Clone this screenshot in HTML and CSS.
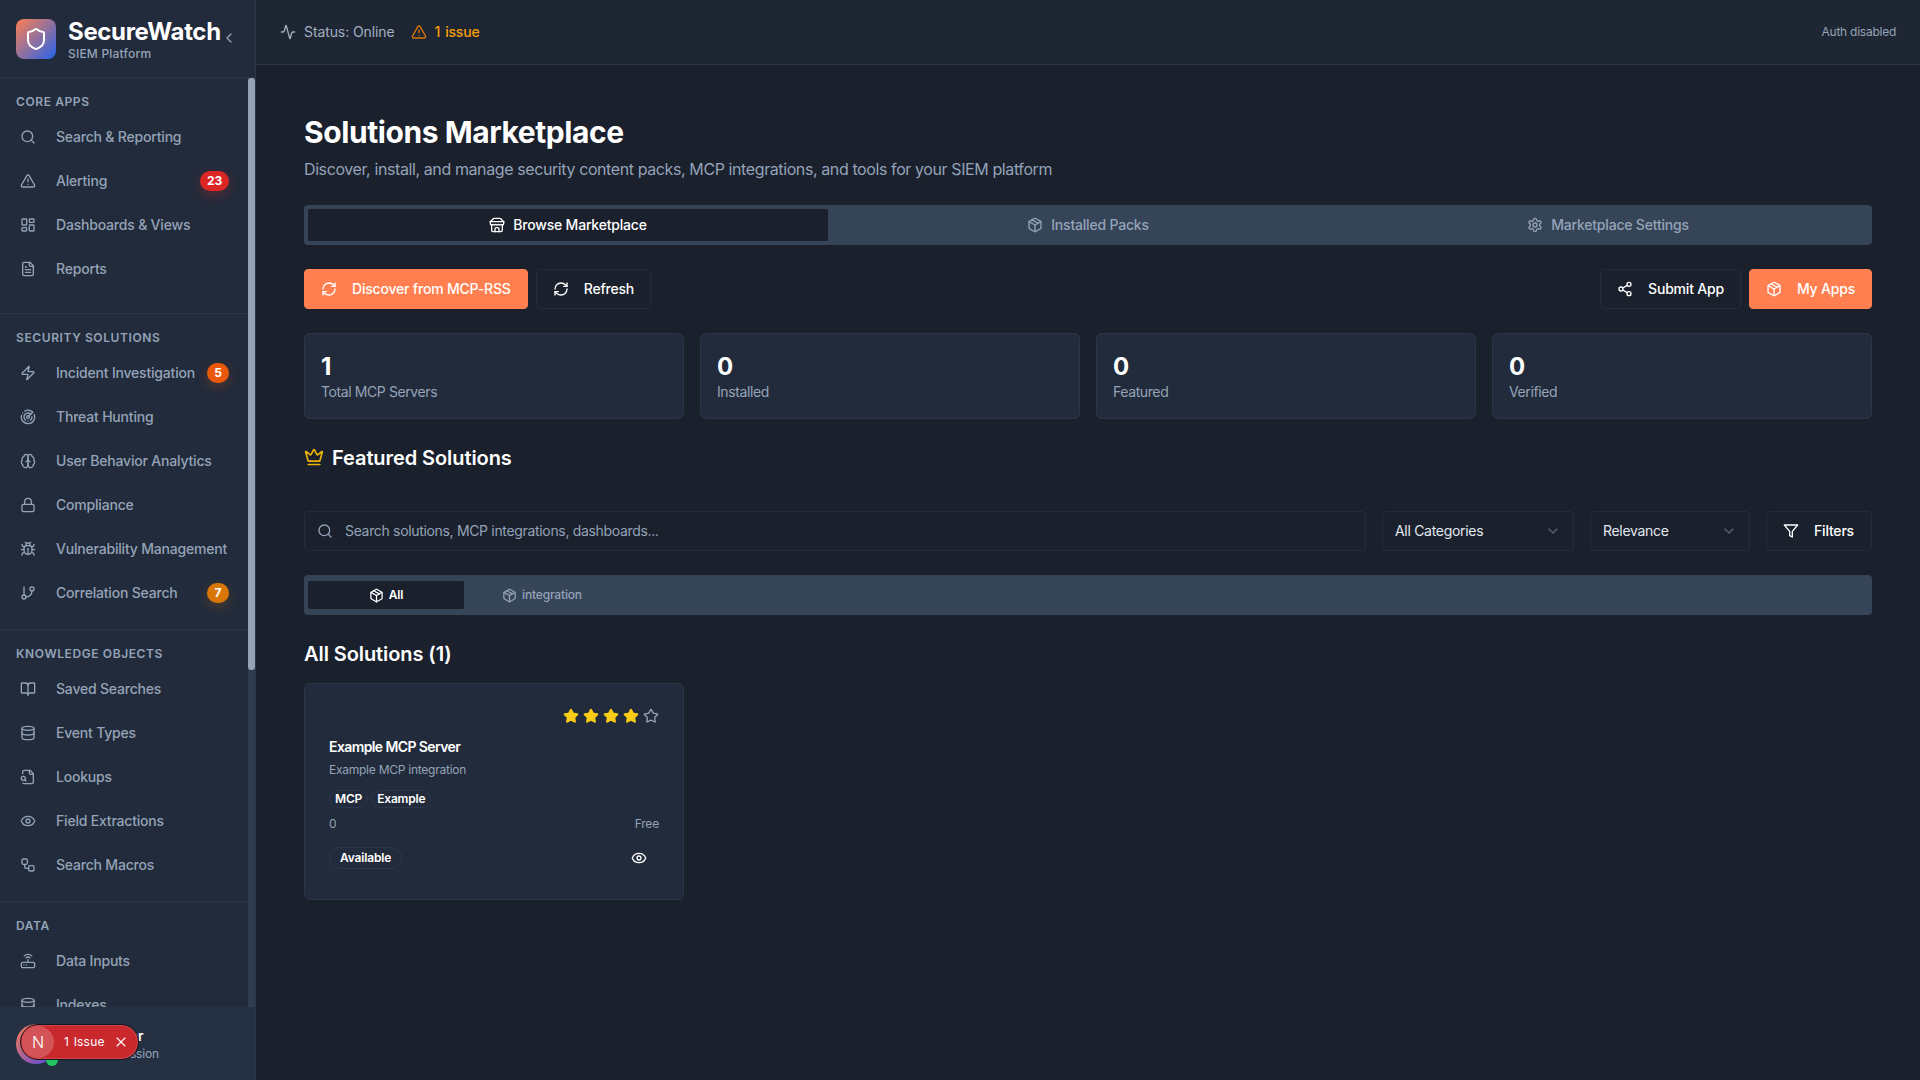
FILE: index.html
```html
<!DOCTYPE html>
<html lang="en">
<head>
  <meta charset="UTF-8" />
  <meta name="viewport" content="width=device-width, initial-scale=1.0"/>
  <title>SecureWatch - Solutions Marketplace</title>
  <link rel="stylesheet" href="styles.css">
</head>
<body>

<svg class="sprite" xmlns="http://www.w3.org/2000/svg">
  <symbol id="i-search" viewBox="0 0 24 24"><circle cx="11" cy="11" r="8"/><path d="m21 21-4.3-4.3"/></symbol>
  <symbol id="i-alert" viewBox="0 0 24 24"><path d="M21.73 18l-8-14a2 2 0 0 0-3.48 0l-8 14A2 2 0 0 0 4 21h16a2 2 0 0 0 1.73-3Z"/><path d="M12 9v4"/><path d="M12 17h.01"/></symbol>
  <symbol id="i-dashboard" viewBox="0 0 24 24"><rect x="3" y="3" width="7" height="9" rx="1"/><rect x="14" y="3" width="7" height="5" rx="1"/><rect x="14" y="12" width="7" height="9" rx="1"/><rect x="3" y="16" width="7" height="5" rx="1"/></symbol>
  <symbol id="i-file" viewBox="0 0 24 24"><path d="M15 2H6a2 2 0 0 0-2 2v16a2 2 0 0 0 2 2h12a2 2 0 0 0 2-2V7Z"/><path d="M14 2v4a2 2 0 0 0 2 2h4"/><path d="M10 9H8"/><path d="M16 13H8"/><path d="M16 17H8"/></symbol>
  <symbol id="i-zap" viewBox="0 0 24 24"><path d="M4 14a1 1 0 0 1-.78-1.63l9.9-10.2a.5.5 0 0 1 .86.46l-1.92 6.02A1 1 0 0 0 13 10h7a1 1 0 0 1 .78 1.63l-9.9 10.2a.5.5 0 0 1-.86-.46l1.92-6.02A1 1 0 0 0 11 14z"/></symbol>
  <symbol id="i-radar" viewBox="0 0 24 24"><path d="M19.07 4.93A10 10 0 0 0 6.99 3.34"/><path d="M4 6h.01"/><path d="M2.29 9.62A10 10 0 1 0 21.31 8.35"/><path d="M16.24 7.76A6 6 0 1 0 8.23 16.67"/><path d="M12 18h.01"/><path d="M17.99 11.66A6 6 0 0 1 15.77 16.67"/><circle cx="12" cy="12" r="2"/><path d="m13.41 10.59 5.66-5.66"/></symbol>
  <symbol id="i-brain" viewBox="0 0 24 24"><path d="M12 5a3 3 0 1 0-5.997.125 4 4 0 0 0-2.526 5.77 4 4 0 0 0 .556 6.588A4 4 0 1 0 12 18Z"/><path d="M12 5a3 3 0 1 1 5.997.125 4 4 0 0 1 2.526 5.77 4 4 0 0 1-.556 6.588A4 4 0 1 1 12 18Z"/><path d="M15 13a4.5 4.5 0 0 1-3-4 4.5 4.5 0 0 1-3 4"/></symbol>
  <symbol id="i-lock" viewBox="0 0 24 24"><rect x="3" y="11" width="18" height="11" rx="2"/><path d="M7 11V7a5 5 0 0 1 10 0v4"/></symbol>
  <symbol id="i-bug" viewBox="0 0 24 24"><path d="m8 2 1.88 1.88"/><path d="M14.12 3.88 16 2"/><path d="M9 7.13v-1a3.003 3.003 0 1 1 6 0v1"/><path d="M12 20c-3.3 0-6-2.7-6-6v-3a4 4 0 0 1 4-4h4a4 4 0 0 1 4 4v3c0 3.3-2.7 6-6 6"/><path d="M12 20v-9"/><path d="M6.53 9C4.6 8.8 3 7.1 3 5"/><path d="M6 13H2"/><path d="M3 21c0-2.1 1.7-3.9 3.8-4"/><path d="M20.97 5c0 2.1-1.6 3.8-3.5 4"/><path d="M22 13h-4"/><path d="M17.2 17c2.1.1 3.8 1.9 3.8 4"/></symbol>
  <symbol id="i-branch" viewBox="0 0 24 24"><path d="M6 3v12"/><circle cx="18" cy="6" r="3"/><circle cx="6" cy="18" r="3"/><path d="M18 9a9 9 0 0 1-9 9"/></symbol>
  <symbol id="i-book" viewBox="0 0 24 24"><path d="M12 7v14"/><path d="M3 18a1 1 0 0 1-1-1V4a1 1 0 0 1 1-1h5a4 4 0 0 1 4 4 4 4 0 0 1 4-4h5a1 1 0 0 1 1 1v13a1 1 0 0 1-1 1h-6a3 3 0 0 0-3 3 3 3 0 0 0-3-3z"/></symbol>
  <symbol id="i-database" viewBox="0 0 24 24"><ellipse cx="12" cy="5" rx="9" ry="3"/><path d="M3 5V19A9 3 0 0 0 21 19V5"/><path d="M3 12A9 3 0 0 0 21 12"/></symbol>
  <symbol id="i-filesearch" viewBox="0 0 24 24"><path d="M14 2v4a2 2 0 0 0 2 2h4"/><path d="M4.268 21a2 2 0 0 0 1.727 1H18a2 2 0 0 0 2-2V7l-5-5H6a2 2 0 0 0-2 2v3"/><path d="m9 18-1.5-1.5"/><circle cx="5" cy="14" r="3"/></symbol>
  <symbol id="i-eye" viewBox="0 0 24 24"><path d="M2.062 12.348a1 1 0 0 1 0-.696 10.75 10.75 0 0 1 19.876 0 1 1 0 0 1 0 .696 10.75 10.75 0 0 1-19.876 0"/><circle cx="12" cy="12" r="3"/></symbol>
  <symbol id="i-workflow" viewBox="0 0 24 24"><rect x="3" y="3" width="8" height="8" rx="2"/><path d="M7 11v4a2 2 0 0 0 2 2h4"/><rect x="13" y="13" width="8" height="8" rx="2"/></symbol>
  <symbol id="i-router" viewBox="0 0 24 24"><rect x="2" y="14" width="20" height="8" rx="2"/><path d="M6.01 18H6"/><path d="M10.01 18H10"/><path d="M12 10v4"/><path d="M14.83 7.17a4 4 0 0 0-5.66 0"/><path d="M17.66 4.34a8 8 0 0 0-11.31 0"/></symbol>
  <symbol id="i-activity" viewBox="0 0 24 24"><path d="M22 12h-2.48a2 2 0 0 0-1.93 1.46l-2.35 8.36a.25.25 0 0 1-.48 0L9.24 2.18a.25.25 0 0 0-.48 0l-2.35 8.36A2 2 0 0 1 4.49 12H2"/></symbol>
  <symbol id="i-store" viewBox="0 0 24 24"><path d="m2 7 4.41-4.41A2 2 0 0 1 7.83 2h8.34a2 2 0 0 1 1.42.59L22 7"/><path d="M4 12v8a2 2 0 0 0 2 2h12a2 2 0 0 0 2-2v-8"/><path d="M15 22v-4a2 2 0 0 0-2-2h-2a2 2 0 0 0-2 2v4"/><path d="M2 7h20"/><path d="M22 7v3a2 2 0 0 1-2 2a2.7 2.7 0 0 1-1.59-.63.7.7 0 0 0-.82 0A2.7 2.7 0 0 1 16 12a2.7 2.7 0 0 1-1.59-.63.7.7 0 0 0-.82 0A2.7 2.7 0 0 1 12 12a2.7 2.7 0 0 1-1.59-.63.7.7 0 0 0-.82 0A2.7 2.7 0 0 1 8 12a2.7 2.7 0 0 1-1.59-.63.7.7 0 0 0-.82 0A2.7 2.7 0 0 1 4 12a2 2 0 0 1-2-2V7"/></symbol>
  <symbol id="i-package" viewBox="0 0 24 24"><path d="M11 21.73a2 2 0 0 0 2 0l7-4A2 2 0 0 0 21 16V8a2 2 0 0 0-1-1.73l-7-4a2 2 0 0 0-2 0l-7 4A2 2 0 0 0 3 8v8a2 2 0 0 0 1 1.73z"/><path d="M12 22V12"/><path d="M3.29 7 12 12l8.71-5"/><path d="m7.5 4.27 9 5.15"/></symbol>
  <symbol id="i-settings" viewBox="0 0 24 24"><path d="M12.22 2h-.44a2 2 0 0 0-2 2v.18a2 2 0 0 1-1 1.73l-.43.25a2 2 0 0 1-2 0l-.15-.08a2 2 0 0 0-2.73.73l-.22.38a2 2 0 0 0 .73 2.73l.15.1a2 2 0 0 1 1 1.72v.51a2 2 0 0 1-1 1.74l-.15.09a2 2 0 0 0-.73 2.73l.22.38a2 2 0 0 0 2.73.73l.15-.08a2 2 0 0 1 2 0l.43.25a2 2 0 0 1 1 1.73V20a2 2 0 0 0 2 2h.44a2 2 0 0 0 2-2v-.18a2 2 0 0 1 1-1.73l.43-.25a2 2 0 0 1 2 0l.15.08a2 2 0 0 0 2.73-.73l.22-.39a2 2 0 0 0-.73-2.73l-.15-.08a2 2 0 0 1-1-1.74v-.5a2 2 0 0 1 1-1.74l.15-.09a2 2 0 0 0 .73-2.73l-.22-.38a2 2 0 0 0-2.73-.73l-.15.08a2 2 0 0 1-2 0l-.43-.25a2 2 0 0 1-1-1.73V4a2 2 0 0 0-2-2z"/><circle cx="12" cy="12" r="3"/></symbol>
  <symbol id="i-refresh" viewBox="0 0 24 24"><path d="M3 12a9 9 0 0 1 9-9 9.75 9.75 0 0 1 6.74 2.74L21 8"/><path d="M21 3v5h-5"/><path d="M21 12a9 9 0 0 1-9 9 9.75 9.75 0 0 1-6.74-2.74L3 16"/><path d="M8 16H3v5"/></symbol>
  <symbol id="i-share" viewBox="0 0 24 24"><circle cx="18" cy="5" r="3"/><circle cx="6" cy="12" r="3"/><circle cx="18" cy="19" r="3"/><path d="m8.59 13.51 6.83 3.98"/><path d="m15.41 6.51-6.82 3.98"/></symbol>
  <symbol id="i-crown" viewBox="0 0 24 24"><path d="M11.562 3.266a.5.5 0 0 1 .876 0L15.39 8.87a1 1 0 0 0 1.516.294L21.183 5.5a.5.5 0 0 1 .798.519l-2.834 10.246a1 1 0 0 1-.956.734H5.81a1 1 0 0 1-.957-.734L2.02 6.02a.5.5 0 0 1 .798-.519l4.276 3.664a1 1 0 0 0 1.516-.294z"/><path d="M5 21h14"/></symbol>
  <symbol id="i-funnel" viewBox="0 0 24 24"><path d="M22 3H2l8 9.46V19l4 2v-8.54z"/></symbol>
  <symbol id="i-star" viewBox="0 0 24 24"><path d="M11.525 2.295a.53.53 0 0 1 .95 0l2.31 4.679a2.123 2.123 0 0 0 1.595 1.16l5.166.756a.53.53 0 0 1 .294.904l-3.736 3.638a2.123 2.123 0 0 0-.611 1.878l.882 5.14a.53.53 0 0 1-.771.56l-4.618-2.428a2.122 2.122 0 0 0-1.973 0L6.396 21.01a.53.53 0 0 1-.77-.56l.881-5.139a2.122 2.122 0 0 0-.611-1.879L2.16 9.795a.53.53 0 0 1 .294-.906l5.165-.755a2.122 2.122 0 0 0 1.597-1.16z"/></symbol>
  <symbol id="i-shield" viewBox="0 0 24 24"><path d="M20 13c0 5-3.5 7.5-7.66 8.95a1 1 0 0 1-.67-.01C7.5 20.5 4 18 4 13V6a1 1 0 0 1 1-1c2 0 4.5-1.2 6.24-2.72a1.17 1.17 0 0 1 1.52 0C14.51 3.81 17 5 19 5a1 1 0 0 1 1 1z"/></symbol>
  <symbol id="i-chevron-down" viewBox="0 0 24 24"><path d="m6 9 6 6 6-6"/></symbol>
  <symbol id="i-chevron-left" viewBox="0 0 24 24"><path d="m15 18-6-6 6-6"/></symbol>
  <symbol id="i-x" viewBox="0 0 24 24"><path d="M18 6 6 18"/><path d="m6 6 12 12"/></symbol>
</svg>

<aside class="sidebar">
  <div class="brand">
    <div class="brand-logo"><svg class="icon icon-logo"><use href="#i-shield"/></svg></div>
    <div class="brand-text">
      <div class="brand-name">SecureWatch</div>
      <div class="brand-sub">SIEM Platform</div>
    </div>
    <svg class="icon brand-toggle"><use href="#i-chevron-left"/></svg>
  </div>

  <div class="nav-wrap">
    <nav class="nav">
      <section class="nav-section nav-section-first">
        <h3 class="nav-label">Core Apps</h3>
        <a class="nav-item"><svg class="icon"><use href="#i-search"/></svg><span>Search &amp; Reporting</span></a>
        <a class="nav-item"><svg class="icon"><use href="#i-alert"/></svg><span>Alerting</span><b class="nav-badge badge-red">23</b></a>
        <a class="nav-item"><svg class="icon"><use href="#i-dashboard"/></svg><span>Dashboards &amp; Views</span></a>
        <a class="nav-item"><svg class="icon"><use href="#i-file"/></svg><span>Reports</span></a>
      </section>
      <section class="nav-section">
        <h3 class="nav-label">Security Solutions</h3>
        <a class="nav-item"><svg class="icon"><use href="#i-zap"/></svg><span>Incident Investigation</span><b class="nav-badge badge-orange">5</b></a>
        <a class="nav-item"><svg class="icon"><use href="#i-radar"/></svg><span>Threat Hunting</span></a>
        <a class="nav-item"><svg class="icon"><use href="#i-brain"/></svg><span>User Behavior Analytics</span></a>
        <a class="nav-item"><svg class="icon"><use href="#i-lock"/></svg><span>Compliance</span></a>
        <a class="nav-item"><svg class="icon"><use href="#i-bug"/></svg><span>Vulnerability Management</span></a>
        <a class="nav-item"><svg class="icon"><use href="#i-branch"/></svg><span>Correlation Search</span><b class="nav-badge badge-amber">7</b></a>
      </section>
      <section class="nav-section">
        <h3 class="nav-label">Knowledge Objects</h3>
        <a class="nav-item"><svg class="icon"><use href="#i-book"/></svg><span>Saved Searches</span></a>
        <a class="nav-item"><svg class="icon"><use href="#i-database"/></svg><span>Event Types</span></a>
        <a class="nav-item"><svg class="icon"><use href="#i-filesearch"/></svg><span>Lookups</span></a>
        <a class="nav-item"><svg class="icon"><use href="#i-eye"/></svg><span>Field Extractions</span></a>
        <a class="nav-item"><svg class="icon"><use href="#i-workflow"/></svg><span>Search Macros</span></a>
      </section>
      <section class="nav-section">
        <h3 class="nav-label">Data</h3>
        <a class="nav-item"><svg class="icon"><use href="#i-router"/></svg><span>Data Inputs</span></a>
        <a class="nav-item"><svg class="icon"><use href="#i-database"/></svg><span>Indexes</span></a>
      </section>
    </nav>
    <div class="scroll-track"><div class="scroll-thumb"></div></div>
  </div>

  <div class="user">
    <div class="user-avatar"><span class="user-dot"></span></div>
    <div class="user-text">
      <div class="user-name">Guest User</div>
      <div class="user-sub">Local session</div>
    </div>
  </div>
</aside>

<div class="page">
  <header class="topbar">
    <div class="topbar-status">
      <svg class="icon"><use href="#i-activity"/></svg>
      <span>Status: Online</span>
    </div>
    <div class="topbar-issue">
      <svg class="icon"><use href="#i-alert"/></svg>
      <span>1 issue</span>
    </div>
    <div class="topbar-auth">Auth disabled</div>
  </header>

  <main class="content">
    <h1 class="title">Solutions Marketplace</h1>
    <p class="subtitle">Discover, install, and manage security content packs, MCP integrations, and tools for your SIEM platform</p>

    <div class="tabs">
      <div class="tab tab-active"><svg class="icon"><use href="#i-store"/></svg>Browse Marketplace</div>
      <div class="tab"><svg class="icon"><use href="#i-package"/></svg>Installed Packs</div>
      <div class="tab"><svg class="icon"><use href="#i-settings"/></svg>Marketplace Settings</div>
    </div>

    <div class="actions">
      <button class="btn btn-primary"><svg class="icon"><use href="#i-refresh"/></svg>Discover from MCP-RSS</button>
      <button class="btn"><svg class="icon"><use href="#i-refresh"/></svg>Refresh</button>
      <div class="actions-right">
        <button class="btn"><svg class="icon"><use href="#i-share"/></svg>Submit App</button>
        <button class="btn btn-primary"><svg class="icon"><use href="#i-package"/></svg>My Apps</button>
      </div>
    </div>

    <div class="stats">
      <div class="stat"><div class="stat-value">1</div><div class="stat-label">Total MCP Servers</div></div>
      <div class="stat"><div class="stat-value">0</div><div class="stat-label">Installed</div></div>
      <div class="stat"><div class="stat-value">0</div><div class="stat-label">Featured</div></div>
      <div class="stat"><div class="stat-value">0</div><div class="stat-label">Verified</div></div>
    </div>

    <h2 class="section-title featured"><svg class="icon icon-crown"><use href="#i-crown"/></svg>Featured Solutions</h2>

    <div class="filters">
      <div class="search">
        <svg class="icon"><use href="#i-search"/></svg>
        <span>Search solutions, MCP integrations, dashboards...</span>
      </div>
      <div class="select select-cat">All Categories<svg class="icon"><use href="#i-chevron-down"/></svg></div>
      <div class="select select-sort">Relevance<svg class="icon"><use href="#i-chevron-down"/></svg></div>
      <button class="btn btn-filter"><svg class="icon"><use href="#i-funnel"/></svg>Filters</button>
    </div>

    <div class="cat-tabs">
      <div class="cat-tab cat-tab-active"><svg class="icon"><use href="#i-package"/></svg>All</div>
      <div class="cat-tab"><svg class="icon"><use href="#i-package"/></svg>integration</div>
    </div>

    <h2 class="section-title all-title">All Solutions (1)</h2>

    <div class="grid">
      <article class="card">
        <div class="stars">
          <svg class="icon star-on"><use href="#i-star"/></svg>
          <svg class="icon star-on"><use href="#i-star"/></svg>
          <svg class="icon star-on"><use href="#i-star"/></svg>
          <svg class="icon star-on"><use href="#i-star"/></svg>
          <svg class="icon star-off"><use href="#i-star"/></svg>
        </div>
        <div class="card-title">Example MCP Server</div>
        <div class="card-desc">Example MCP integration</div>
        <div class="card-tags">
          <span class="tag">MCP</span>
          <span class="tag">Example</span>
        </div>
        <div class="card-meta"><span>0</span><span>Free</span></div>
        <div class="card-foot">
          <span class="tag tag-status">Available</span>
          <button class="icon-btn"><svg class="icon"><use href="#i-eye"/></svg></button>
        </div>
      </article>
    </div>
  </main>
</div>

<div class="issue-pill">
  <span class="issue-n">N</span>
  <span class="issue-text">1 Issue</span>
  <svg class="icon issue-x"><use href="#i-x"/></svg>
</div>

</body>
</html>
```

FILE: styles.css
```css
* {
  box-sizing: border-box;
  letter-spacing: -0.014em;
}

html, body {
  height: 100%;
}

body {
  margin: 0;
  display: flex;
  overflow: hidden;
  background: #1a202c;
  color: #fff;
  font-family: Inter, "Liberation Sans", sans-serif;
  font-size: 14px;
  line-height: 20px;
}

.sprite {
  display: none;
}

.icon {
  width: 16px;
  height: 16px;
  flex: none;
  fill: none;
  stroke: currentColor;
  stroke-width: 2;
  stroke-linecap: round;
  stroke-linejoin: round;
}

button {
  font: inherit;
  color: inherit;
  background: none;
  border: none;
}

/* sidebar */

.sidebar {
  width: 256px;
  flex: none;
  height: 100vh;
  display: flex;
  flex-direction: column;
  background: #222b3b;
  border-right: 1px solid #2b3648;
}

.brand {
  height: 78px;
  flex: none;
  display: flex;
  align-items: center;
  padding: 0 16px;
  gap: 12px;
  position: relative;
  border-bottom: 1px solid #2b3648;
}

.brand-logo {
  width: 40px;
  height: 40px;
  border-radius: 8px;
  display: flex;
  align-items: center;
  justify-content: center;
  background: linear-gradient(135deg, #ff7f50, #2563eb);
}

.icon-logo {
  width: 24px;
  height: 24px;
  color: #fff;
}

.brand-name {
  font-size: 24px;
  line-height: 32px;
  font-weight: 700;
  margin-top: 1px;
}

.brand-sub {
  font-size: 12px;
  line-height: 16px;
  font-weight: 500;
  letter-spacing: 0.2px;
  color: #94a3b8;
  margin-top: -2px;
}

.brand-toggle {
  position: absolute;
  left: 221px;
  top: 30px;
  color: #94a3b8;
}

.nav-wrap {
  flex: 1;
  min-height: 0;
  position: relative;
}

.nav {
  height: 100%;
  overflow: hidden;
}

.nav-section {
  padding: 16px 0 14px;
  border-bottom: 1px solid #2b3648;
}

.nav-section-first {
  padding-bottom: 22px;
}

.nav-label {
  margin: 0 0 5px;
  padding-left: 16px;
  font-size: 12px;
  line-height: 16px;
  font-weight: 600;
  letter-spacing: 0.6px;
  text-transform: uppercase;
  color: #94a3b8;
}

.nav-item {
  height: 44px;
  display: flex;
  align-items: center;
  padding: 0 26px 0 20px;
  font-weight: 500;
  white-space: nowrap;
  color: #94a3b8;
}

.nav-item .icon {
  margin-right: 20px;
}

.nav-badge {
  margin-left: auto;
  min-width: 22px;
  height: 20px;
  padding: 0 7px;
  border-radius: 10px;
  display: flex;
  align-items: center;
  justify-content: center;
  font-size: 12px;
  font-weight: 700;
  color: #fff;
}

.badge-red {
  background: #dc2626;
  box-shadow: 0 4px 12px rgba(220, 38, 38, 0.3);
}

.badge-orange {
  background: #ea580c;
  box-shadow: 0 4px 12px rgba(234, 88, 12, 0.25);
}

.badge-amber {
  background: #d97706;
  box-shadow: 0 4px 12px rgba(217, 119, 6, 0.25);
}

.scroll-track {
  position: absolute;
  top: 0;
  bottom: 0;
  right: 0;
  width: 7px;
  background: #2f3c50;
}

.scroll-thumb {
  height: 592px;
  border-radius: 3px;
  background: #94a3b8;
}

.user {
  height: 73px;
  flex: none;
  display: flex;
  align-items: center;
  gap: 14px;
  padding: 0 16px;
  background: #253043;
  position: relative;
}

.user-avatar {
  width: 40px;
  height: 40px;
  border-radius: 50%;
  flex: none;
  position: relative;
  background: linear-gradient(135deg, #ff7f50, #4f46e5);
}

.user-dot {
  position: absolute;
  right: -2px;
  bottom: -2px;
  width: 12px;
  height: 12px;
  border-radius: 50%;
  background: #22c55e;
}

.user-name {
  font-weight: 600;
}

.user-sub {
  font-size: 12px;
  line-height: 16px;
  color: #94a3b8;
  padding-left: 14px;
}

/* top bar */

.page {
  flex: 1;
  min-width: 0;
  display: flex;
  flex-direction: column;
}

.topbar {
  height: 65px;
  flex: none;
  display: flex;
  align-items: center;
  padding: 0 24px;
  background: #1f2633;
  border-bottom: 1px solid #2b3648;
}

.topbar-status {
  display: flex;
  align-items: center;
  gap: 8px;
  color: #a0aec0;
}

.topbar-status span {
  letter-spacing: -0.1px;
}

.topbar-issue {
  display: flex;
  align-items: center;
  gap: 8px;
  margin-left: 16px;
  font-weight: 500;
  color: #f59e0b;
}

.topbar-issue span {
  word-spacing: 1.5px;
}

.topbar-issue .icon {
  color: #d97706;
}

.topbar-auth {
  margin-left: auto;
  font-size: 12px;
  letter-spacing: -0.25px;
  color: #94a3b8;
}

/* main content */

.content {
  flex: 1;
  padding: 49px 48px 0;
}

.title {
  margin: 0;
  font-size: 30px;
  line-height: 36px;
  font-weight: 700;
}

.subtitle {
  margin: 7px 0 0;
  font-size: 16px;
  line-height: 24px;
  letter-spacing: -0.4px;
  color: #94a3b8;
}

.tabs {
  margin-top: 24px;
  height: 40px;
  padding: 4px;
  display: grid;
  grid-template-columns: repeat(3, 1fr);
  background: #364458;
  border-radius: 4px;
}

.tab {
  display: flex;
  align-items: center;
  justify-content: center;
  gap: 8px;
  font-weight: 500;
  color: #94a3b8;
  border-radius: 2px;
}

.tab-active {
  background: #1a202c;
  color: #fff;
}

.actions {
  margin-top: 24px;
  display: flex;
  gap: 8px;
}

.actions-right {
  margin-left: auto;
  display: flex;
  gap: 8px;
}

.btn {
  height: 40px;
  padding: 0 16px;
  display: flex;
  align-items: center;
  gap: 15px;
  font-weight: 500;
  color: #fff;
  border: 1px solid #232c3b;
  border-radius: 4px;
}

.btn-primary {
  background: #ff7f50;
  border-color: #ff7f50;
}

.stats {
  margin-top: 24px;
  display: grid;
  grid-template-columns: repeat(4, 1fr);
  gap: 16px;
}

.stat {
  padding: 16px;
  background: #222b3b;
  border: 1px solid #2b3648;
  border-radius: 6px;
}

.stat-value {
  font-size: 24px;
  line-height: 32px;
  font-weight: 700;
  padding-top: 1px;
  margin-bottom: -1px;
}

.stat-label {
  letter-spacing: -0.4px;
  color: #94a3b8;
}

.section-title {
  margin: 0;
  font-size: 20px;
  line-height: 28px;
  font-weight: 600;
  letter-spacing: -0.08px;
}

.featured {
  margin-top: 25px;
  display: flex;
  align-items: center;
  gap: 8px;
}

.icon-crown {
  width: 20px;
  height: 20px;
  color: #eab308;
  position: relative;
  top: -1px;
}

.filters {
  margin-top: 39px;
  display: flex;
  gap: 16px;
}

.search {
  flex: 1;
  height: 40px;
  display: flex;
  align-items: center;
  gap: 12px;
  padding: 0 12px;
  color: #94a3b8;
  border: 1px solid #232c3b;
  border-radius: 4px;
}

.search span {
  letter-spacing: -0.33px;
}

.select {
  height: 40px;
  display: flex;
  align-items: center;
  justify-content: space-between;
  padding: 0 12px;
  letter-spacing: -0.3px;
  color: #e2e8f0;
  border: 1px solid #232c3b;
  border-radius: 4px;
}

.select .icon {
  opacity: 0.5;
  color: #94a3b8;
}

.select-cat {
  width: 192px;
}

.select-sort {
  width: 160px;
}

.btn-filter {
  width: 106px;
}

.cat-tabs {
  margin-top: 24px;
  height: 40px;
  padding: 6px 4px;
  display: grid;
  grid-template-columns: repeat(10, 1fr);
  background: #364458;
  border-radius: 4px;
}

.cat-tab {
  display: flex;
  align-items: center;
  justify-content: center;
  gap: 5px;
  font-size: 12px;
  font-weight: 500;
  color: #94a3b8;
  border-radius: 2px;
}

.cat-tab .icon {
  width: 15px;
  height: 15px;
}

.cat-tab-active {
  background: #1a202c;
  color: #fff;
  font-weight: 600;
}

.all-title {
  margin-top: 25px;
}

.grid {
  margin-top: 15px;
  display: grid;
  grid-template-columns: repeat(4, 1fr);
  gap: 16px;
}

.card {
  height: 217px;
  padding: 24px;
  background: #222b3b;
  border: 1px solid #2b3648;
  border-radius: 6px;
}

.stars {
  display: flex;
  justify-content: flex-end;
  gap: 4px;
}

.star-on {
  fill: #facc15;
  color: #facc15;
}

.star-off {
  color: #94a3b8;
}

.card-title {
  margin-top: 13px;
  font-weight: 600;
  letter-spacing: -0.6px;
}

.card-desc {
  margin-top: 5px;
  font-size: 12px;
  line-height: 16px;
  letter-spacing: -0.25px;
  color: #94a3b8;
}

.card-tags {
  margin-top: 12px;
  display: flex;
  gap: 3px;
}

.tag {
  height: 18px;
  padding: 0 5px;
  display: inline-flex;
  align-items: center;
  font-size: 12px;
  font-weight: 600;
  border: 1px solid #2b3648;
  border-radius: 9px;
}

.card-meta {
  margin-top: 8px;
  display: flex;
  justify-content: space-between;
  font-size: 12px;
  line-height: 16px;
  color: #94a3b8;
}

.card-foot {
  margin-top: 8px;
  height: 35px;
  display: flex;
  align-items: center;
  justify-content: space-between;
}

.tag-status {
  height: 22px;
  padding: 0 10px;
  border-radius: 11px;
}

.icon-btn {
  width: 40px;
  height: 35px;
  padding: 0;
  display: flex;
  align-items: center;
  justify-content: center;
}

/* dev indicator, sits over the user block */

.issue-pill {
  position: fixed;
  left: 20px;
  top: 1024px;
  width: 119px;
  height: 36px;
  display: flex;
  align-items: center;
  padding-left: 1px;
  background: #c9282d;
  border: 1px solid #14181f;
  border-radius: 18px;
  box-shadow: inset 0 0 0 1px rgba(255, 255, 255, 0.15);
}

.issue-n {
  width: 32px;
  height: 32px;
  border-radius: 50%;
  display: flex;
  align-items: center;
  justify-content: center;
  font-size: 16px;
  font-weight: 300;
  color: #fff;
  background: rgba(255, 255, 255, 0.2);
}

.issue-text {
  margin-left: 10px;
  font-size: 12px;
  font-weight: 400;
  word-spacing: 1px;
  letter-spacing: 0.2px;
}

.issue-x {
  margin-left: 8px;
  width: 16px;
  height: 16px;
  stroke-width: 1.6;
}
```
